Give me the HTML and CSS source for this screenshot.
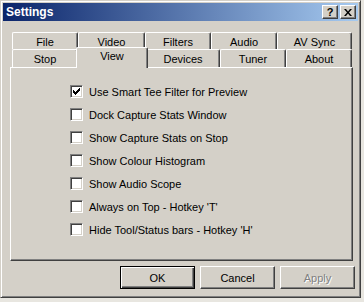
FILE: index.html
```html
<!DOCTYPE html>
<html lang="en">
<head>
    <meta charset="UTF-8">
    <title>Settings</title>
    <link rel="stylesheet" href="styles.css">
</head>
<body>
    <div class="window">
        <div class="titlebar">
            <span class="title">Settings</span>
            <div class="caption-buttons">
                <div class="caption-btn help">?</div>
                <div class="caption-btn">
                    <svg width="8" height="7" viewBox="0 0 8 7">
                        <path d="M0 0h2l2 2.5L6 0h2L5 3.5 8 7H6L4 4.5 2 7H0l3-3.5z" fill="#000"/>
                    </svg>
                </div>
            </div>
        </div>

        <div class="tabs">
            <div class="tab-row">
                <div class="tab w66">File</div>
                <div class="tab w67">Video</div>
                <div class="tab w66">Filters</div>
                <div class="tab w66">Audio</div>
                <div class="tab w75">AV Sync</div>
            </div>
            <div class="tab-row front">
                <div class="tab w66">Stop</div>
                <div class="tab active">View</div>
                <div class="tab w74">Devices</div>
                <div class="tab w66">Tuner</div>
                <div class="tab w66">About</div>
            </div>
        </div>

        <div class="panel">
            <label class="option"><span class="box checked"><svg width="7" height="7" viewBox="0 0 7 7"><path d="M0 2h1v1h1v1h1V3h1V2h1V1h1V0h1v3H6v1H5v1H4v1H3v1H2V6H1V5H0z" fill="#000"/></svg></span>Use Smart Tee Filter for Preview</label>
            <label class="option"><span class="box"></span>Dock Capture Stats Window</label>
            <label class="option"><span class="box"></span>Show Capture Stats on Stop</label>
            <label class="option"><span class="box"></span>Show Colour Histogram</label>
            <label class="option"><span class="box"></span>Show Audio Scope</label>
            <label class="option"><span class="box"></span>Always on Top - Hotkey 'T'</label>
            <label class="option"><span class="box"></span>Hide Tool/Status bars - Hotkey 'H'</label>
        </div>

        <div class="buttons">
            <div class="btn default"><span>OK</span></div>
            <div class="btn"><span>Cancel</span></div>
            <div class="btn disabled"><span>Apply</span></div>
        </div>
    </div>
</body>
</html>
```

FILE: styles.css
```css
html {
    background: #e8e6e0;
}

body {
    margin: 0;
    font-family: "Liberation Sans", Arial, sans-serif;
    font-size: 11px;
    color: #000;
}

.window {
    width: 361px;
    height: 298px;
    box-sizing: border-box;
    background: #d4d0c8;
    border: 1px solid;
    border-color: #d4d0c8 #404040 #404040 #d4d0c8;
    box-shadow: inset 1px 1px #fff, inset -1px -1px #808080;
    padding: 2px;
    display: flex;
    flex-direction: column;
}

.titlebar {
    height: 18px;
    background: linear-gradient(to right, #0a246a, #a6caf0);
    display: flex;
    align-items: center;
    justify-content: space-between;
    padding: 0 2px 0 3px;
}

.title {
    color: #fff;
    font-weight: bold;
    font-size: 12px;
}

.caption-buttons {
    display: flex;
    gap: 2px;
}

.caption-btn {
    width: 16px;
    height: 14px;
    box-sizing: border-box;
    background: #d4d0c8;
    border: 1px solid;
    border-color: #fff #404040 #404040 #fff;
    box-shadow: inset -1px -1px #808080;
    display: flex;
    align-items: center;
    justify-content: center;
}

.caption-btn.help {
    font-weight: bold;
    font-size: 11px;
    line-height: 1;
}

.tabs {
    margin: 11px 0 0 9px;
    width: 340px;
}

.tab-row {
    display: flex;
    height: 17px;
}

.tab-row.front {
    height: 18px;
}

.tab {
    box-sizing: border-box;
    height: 100%;
    border-top: 1px solid #fff;
    border-left: 1px solid #fff;
    border-right: 1px solid #404040;
    border-radius: 2px 2px 0 0;
    box-shadow: inset -1px 0 #808080;
    background: #d4d0c8;
    display: flex;
    align-items: center;
    justify-content: center;
    padding-top: 1px;
}

.w66 { flex: 0 0 66px; }
.w67 { flex: 0 0 67px; }
.w74 { flex: 0 0 74px; }
.w75 { flex: 0 0 75px; }

.tab.active {
    flex: 0 0 72px;
    margin: -2px -2px -1px;
    height: 21px;
    position: relative;
    z-index: 1;
    align-items: flex-start;
    padding-top: 2px;
}

.panel {
    margin-left: 7px;
    width: 343px;
    height: 194px;
    box-sizing: border-box;
    border: 1px solid;
    border-color: #fff #404040 #404040 #fff;
    box-shadow: inset -1px -1px #808080;
    padding: 12px 0 0 59px;
    display: flex;
    flex-direction: column;
}

.option {
    height: 23px;
    display: flex;
    align-items: center;
    gap: 6px;
}

.box {
    width: 13px;
    height: 13px;
    box-sizing: border-box;
    background: #fff;
    border: 1px solid;
    border-color: #808080 #fff #fff #808080;
    box-shadow: inset 1px 1px #404040, inset -1px -1px #d4d0c8;
    display: flex;
    align-items: center;
    justify-content: center;
}

.buttons {
    display: flex;
    justify-content: flex-end;
    gap: 5px;
    margin: 5px 3px 0 0;
}

.btn {
    width: 75px;
    height: 23px;
    box-sizing: border-box;
    border: 1px solid;
    border-color: #fff #404040 #404040 #fff;
    box-shadow: inset -1px -1px #808080;
    display: flex;
    align-items: center;
    justify-content: center;
}

.btn.default {
    border: 1px solid #000;
    box-shadow: inset 1px 1px #fff, inset -1px -1px #404040, inset -2px -2px #808080;
}

.btn.disabled {
    color: #808080;
    text-shadow: 1px 1px #fff;
}
```
